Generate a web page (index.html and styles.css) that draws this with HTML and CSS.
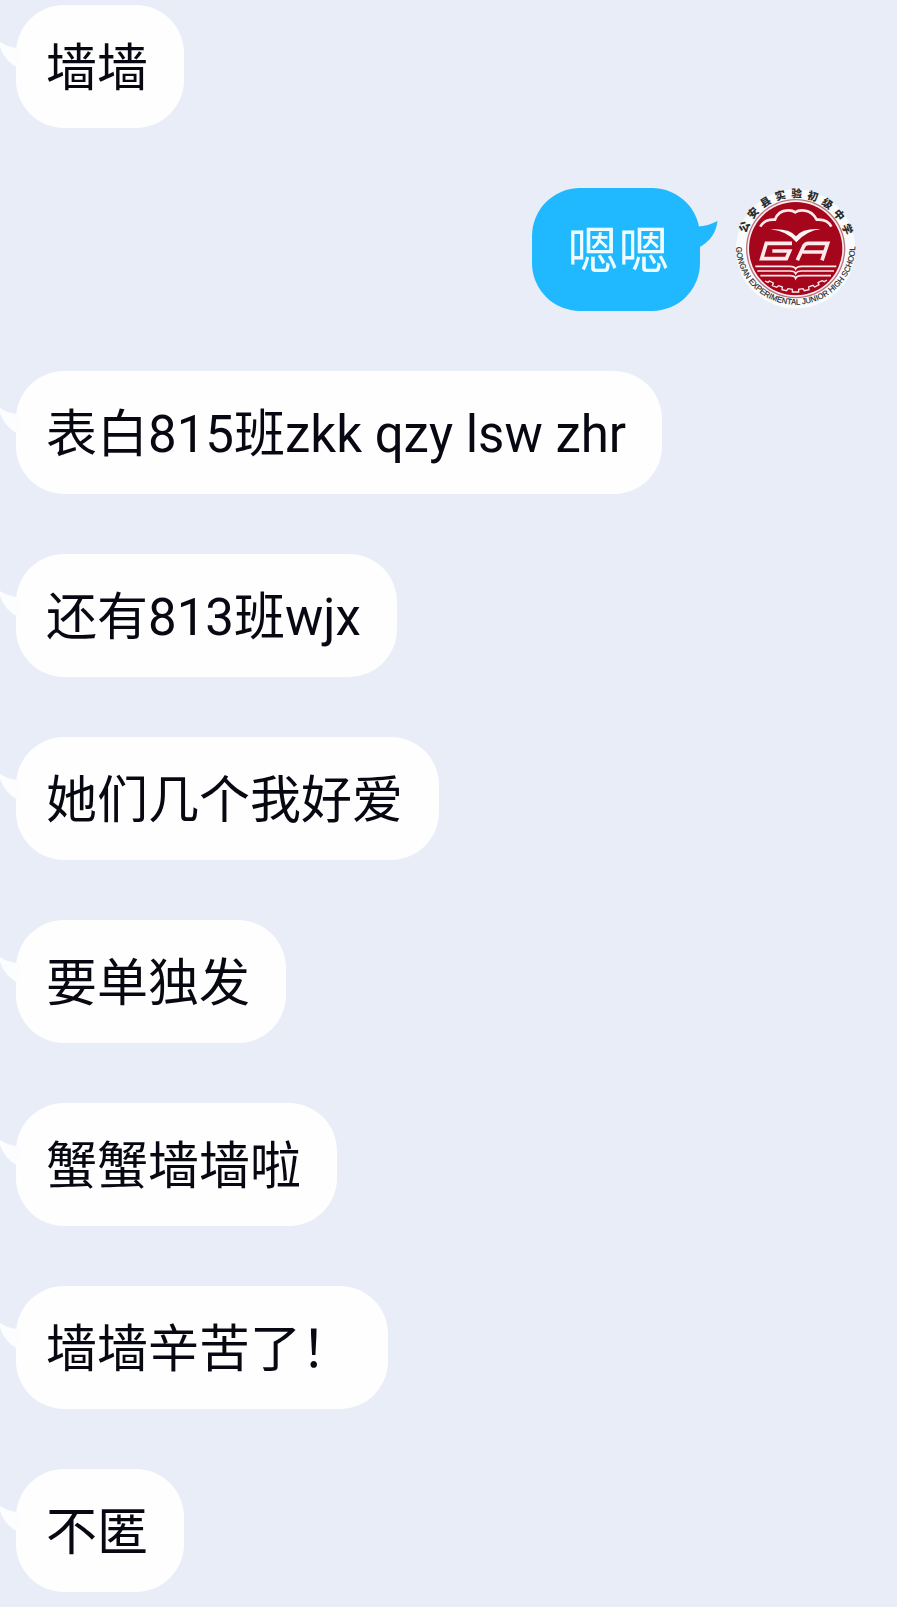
FILE: index.html
```html
<!DOCTYPE html>
<html lang="zh-CN">
<head>
<meta charset="utf-8">
<title>聊天</title>
<link rel="stylesheet" href="styles.css">
</head>
<body>
<main class="chat">
  <div class="row"><div class="bubble">墙墙<svg class="tail" viewBox="0 0 20 30"><path d="M20 9Q9 9 0 3V8Q5 23 20 30Z"/></svg></div></div>
  <div class="row row-own">
    <div class="bubble bubble-own">嗯嗯<svg class="tail tail-own" viewBox="0 0 20 30"><path d="M0 7.500Q10 7 19.500 2Q17.500 20 0 29Z"/></svg></div>
    <svg class="avatar" viewBox="32 23 360 360">
      <defs>
        <path id="arc-top" d="M55 206A155 155 0 0 1 365 206"/>
        <path id="arc-bottom" d="M32 194A179 179 0 0 0 390 194"/>
      </defs>
      <circle cx="211" cy="206" r="179" fill="#fafbfd"/>
      <circle cx="211" cy="205" r="149" fill="#b77580"/>
      <circle cx="211" cy="205" r="145" fill="#fbeef0"/>
      <circle cx="211" cy="205" r="140" fill="#a5061b"/>
      <text class="seal-cn"><textPath href="#arc-top" startOffset="48" textLength="398" lengthAdjust="spacing">公安县实验初级中学</textPath></text>
      <text class="seal-en"><textPath href="#arc-bottom" startOffset="6" textLength="552" lengthAdjust="spacingAndGlyphs">GONGAN EXPERIMENTAL JUNIOR HIGH SCHOOL</textPath></text>
      <g fill="none" stroke="#fbe9eb" stroke-width="8">
        <path d="M105 139Q117 116 149 118Q158 91 187 90Q201 89 210 96Q220 88 238 91Q261 93 274 118Q306 115 318 139"/>
        <path d="M200 189H123L109 235H183L193 212H141" stroke-width="11"/>
        <path d="M216 240L234 200Q238 189 250 189H307L290 240M232 215H297" stroke-width="11"/>
        <path d="M90 258H194Q208 258 211 266Q215 258 229 258H333M96 272H194Q208 272 211 280Q215 272 229 272H326M105 286H194Q208 286 211 294Q215 286 229 286H317" stroke-width="5"/>
        <path d="M119 302L128 306L132 302L144 308L141 316L154 321L160 316L171 320L170 328L184 331L188 325L201 327V335H220V327L233 325L237 331L251 328L250 320L263 315L268 320L281 313L278 307L290 301L297 304L305 299" stroke-width="4"/>
      </g>
      <path d="M135 147Q194 143 212 168Q230 143 286 146Q242 152 213 186Q186 152 135 147Z" fill="#fff6f7"/>
    </svg>
  </div>
  <div class="row"><div class="bubble">表白815班zkk qzy lsw zhr<svg class="tail" viewBox="0 0 20 30"><path d="M20 9Q9 9 0 3V8Q5 23 20 30Z"/></svg></div></div>
  <div class="row"><div class="bubble">还有813班wjx<svg class="tail" viewBox="0 0 20 30"><path d="M20 9Q9 9 0 3V8Q5 23 20 30Z"/></svg></div></div>
  <div class="row"><div class="bubble">她们几个我好爱<svg class="tail" viewBox="0 0 20 30"><path d="M20 9Q9 9 0 3V8Q5 23 20 30Z"/></svg></div></div>
  <div class="row"><div class="bubble">要单独发<svg class="tail" viewBox="0 0 20 30"><path d="M20 9Q9 9 0 3V8Q5 23 20 30Z"/></svg></div></div>
  <div class="row"><div class="bubble">蟹蟹墙墙啦<svg class="tail" viewBox="0 0 20 30"><path d="M20 9Q9 9 0 3V8Q5 23 20 30Z"/></svg></div></div>
  <div class="row"><div class="bubble">墙墙辛苦了！<svg class="tail" viewBox="0 0 20 30"><path d="M20 9Q9 9 0 3V8Q5 23 20 30Z"/></svg></div></div>
  <div class="row"><div class="bubble">不匿<svg class="tail" viewBox="0 0 20 30"><path d="M20 9Q9 9 0 3V8Q5 23 20 30Z"/></svg></div></div>
</main>
</body>
</html>
```

FILE: styles.css
```css
body {
  margin: 0;
  background: #e9edf7;
}

.chat {
  box-sizing: border-box;
  height: 1607px;
  padding: 5px 41px 0 16px;
  display: flex;
  flex-direction: column;
  gap: 60px;
  overflow: hidden;
}

.row {
  display: flex;
  flex: none;
  height: 123px;
}

.row-own {
  justify-content: flex-end;
  gap: 36px;
}

.bubble {
  position: relative;
  box-sizing: border-box;
  height: 123px;
  padding: 2px 36px 0 30px;
  border-radius: 48px;
  background: #fefefe;
  color: #080812;
  font: 51px/123px Roboto, "Noto Sans CJK SC", sans-serif;
  white-space: nowrap;
}

.bubble-own {
  padding: 2px 30.500px 0 35.500px;
  background: #20b8ff;
  color: #effcff;
}

.tail {
  position: absolute;
  left: -16px;
  top: 34px;
  width: 20px;
  height: 30px;
  fill: #fbfdfe;
}

.tail-own {
  left: auto;
  right: -18px;
  top: 31px;
  fill: #20b8ff;
}

.avatar {
  width: 120px;
  height: 120px;
  overflow: visible;
}

.seal-cn {
  font: 900 32px "Noto Sans CJK SC", sans-serif;
  fill: #2b2b2b;
}

.seal-en {
  font: 24px "Liberation Sans", sans-serif;
  fill: #26262c;
  stroke: #26262c;
  stroke-width: 0.5px;
}
```
